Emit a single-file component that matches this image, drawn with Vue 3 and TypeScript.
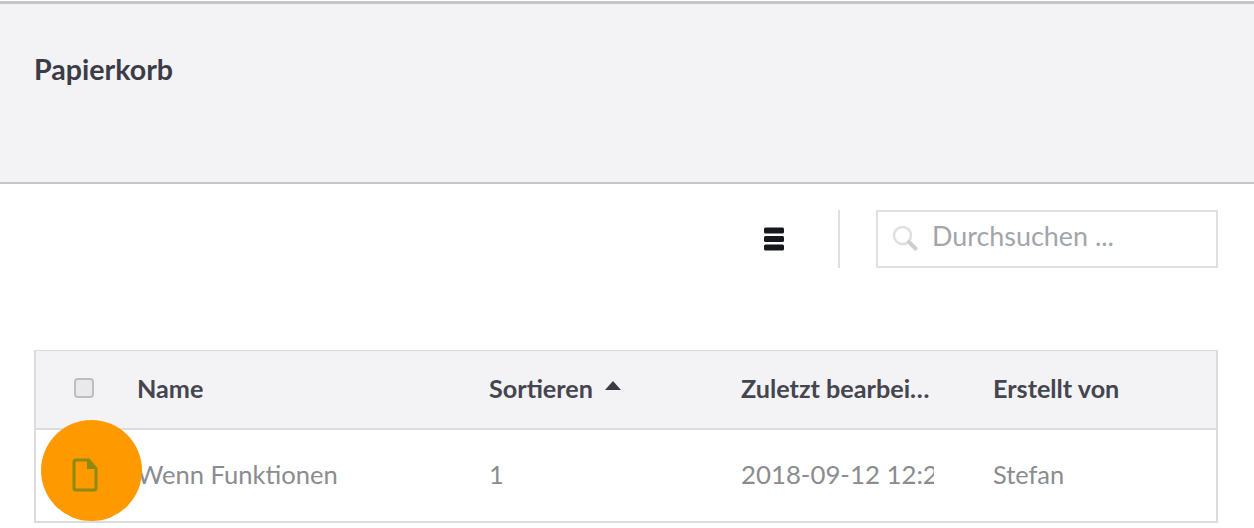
<script setup lang="ts">
interface Column {
  label: string
  sorted?: boolean
}
const columns: Column[] = [
  { label: 'Name' },
  { label: 'Sortieren', sorted: true },
  { label: 'Zuletzt bearbeitet' },
  { label: 'Erstellt von' },
]
const row = ['Wenn Funktionen', '1', '2018-09-12 12:28', 'Stefan']
</script>

<template>
  <div class="page">
    <header class="banner">
      <h1 class="title">Papierkorb</h1>
    </header>

    <div class="toolbar">
      <svg class="menu" viewBox="0 0 20 24" width="20" height="24" aria-hidden="true">
        <rect x="0" y="0.500" width="20" height="6" rx="1.500" fill="#16181d" />
        <rect x="0" y="9" width="20" height="6" rx="1.500" fill="#16181d" />
        <rect x="0" y="17.500" width="20" height="6" rx="1.500" fill="#16181d" />
      </svg>
      <span class="divider"></span>
      <label class="search">
        <svg class="search-icon" viewBox="0 0 26 26" width="26" height="26" aria-hidden="true">
          <circle cx="10.500" cy="10.500" r="8.500" fill="none" stroke="#e0e0e3" stroke-width="2.500" />
          <path d="M17 17l6.500 6.500" stroke="#cfcfd3" stroke-width="4" stroke-linecap="round" />
        </svg>
        <span class="placeholder">Durchsuchen ...</span>
      </label>
    </div>

    <div class="table">
      <div class="tr head">
        <div class="check-cell"><span class="checkbox"></span></div>
        <div v-for="c in columns" :key="c.label" class="td th">
          <span class="clip">{{ c.label }}</span>
          <span v-if="c.sorted" class="caret"></span>
        </div>
      </div>
      <div class="tr body">
        <div class="check-cell">
          <svg class="file" viewBox="0 0 26 34" width="26" height="34" aria-hidden="true">
            <path d="M2 4a2 2 0 0 1 2-2h12.500l7.500 8.500v19.500a2 2 0 0 1-2 2h-18a2 2 0 0 1-2-2z" fill="none" stroke="#8c8a10" stroke-width="3" stroke-linejoin="round" />
            <path d="M15 2.500v8.500h8.500z" fill="#8c8a10" />
          </svg>
        </div>
        <div v-for="(v, i) in row" :key="i" class="td">
          <span class="clip" :class="{ hard: i === 2, wide: i === 0 }">{{ v }}</span>
        </div>
      </div>
      <span class="spot"></span>
    </div>
  </div>
</template>

<style>
html, body { margin: 0; background: #fff; }
</style>

<style scoped>
.page {
  width: 1254px;
  height: 528px;
  overflow: hidden;
  background: #fff;
  font-family: Lato, "Liberation Sans", sans-serif;
  padding-top: 1px;
  box-sizing: border-box;
}
.banner {
  height: 183px;
  box-sizing: border-box;
  background: #f3f3f6;
  border-top: 3px solid #c4c4c9;
  border-bottom: 2px solid #c4c4c9;
  padding: 49px 34px 0;
}
.title {
  margin: 0;
  font-size: 28.600px;
  line-height: 32px;
  font-weight: 700;
  color: #3c3c46;
}
.toolbar {
  height: 58px;
  margin-top: 26px;
  padding-right: 36px;
  display: flex;
  justify-content: flex-end;
  align-items: center;
}
.menu { margin-right: 54px; }
.divider {
  width: 2px;
  height: 58px;
  background: #e0e0e3;
  margin-right: 36px;
}
.search {
  width: 342px;
  height: 58px;
  box-sizing: border-box;
  border: 2px solid #e0e0e3;
  display: flex;
  align-items: center;
  padding-left: 14px;
}
.search-icon { margin-right: 14px; margin-top: -2px; }
.placeholder {
  font-size: 26.900px;
  line-height: 32px;
  margin-top: -7px;
  color: #a3a5ad;
}
.table {
  position: relative;
  width: 1184px;
  height: 173px;
  margin: 82px 0 0 34px;
  box-sizing: border-box;
  border: 2px solid #dcdcdf;
}
.tr {
  display: grid;
  grid-template-columns: 101px 352px 252px 252px 1fr;
  align-items: center;
}
.head {
  height: 77px;
  background: #f3f3f6;
  border-bottom: 2px solid #dcdcdf;
  margin-top: -1px;
}
.body { height: 93px; }
.check-cell {
  display: flex;
  justify-content: center;
  padding-right: 6px;
}
.head .check-cell { margin-top: -4px; }
.checkbox {
  width: 20px;
  height: 20px;
  box-sizing: border-box;
  border: 2px solid #bdbdc1;
  border-radius: 4px;
  background: #e9e9ec;
}
.td {
  display: flex;
  align-items: center;
  min-width: 0;
  font-size: 25.400px;
  line-height: 30px;
  color: #8a8c90;
}
.body .td { margin-top: -6px; }
.th {
  font-weight: 700;
  font-size: 25.200px;
  margin-top: -4px;
  color: #45454f;
}
.clip {
  display: block;
  max-width: 192px;
  white-space: nowrap;
  overflow: hidden;
  text-overflow: ellipsis;
}
.clip.hard { text-overflow: clip; max-width: 193px; font-size: 25.800px; }
.clip.wide { font-size: 25.550px; }
.td:nth-child(2) .clip { max-width: 320px; }
.caret {
  width: 0;
  height: 0;
  margin-left: 12px;
  margin-bottom: 4px;
  border-left: 8px solid transparent;
  border-right: 8px solid transparent;
  border-bottom: 9px solid #3a3a42;
}
.spot {
  position: absolute;
  left: 5px;
  top: 68px;
  width: 101px;
  height: 101px;
  border-radius: 50%;
  background: #ff9900;
}
.file {
  position: relative;
  z-index: 2;
  margin-top: -4px;
  margin-left: 2px;
}
</style>
